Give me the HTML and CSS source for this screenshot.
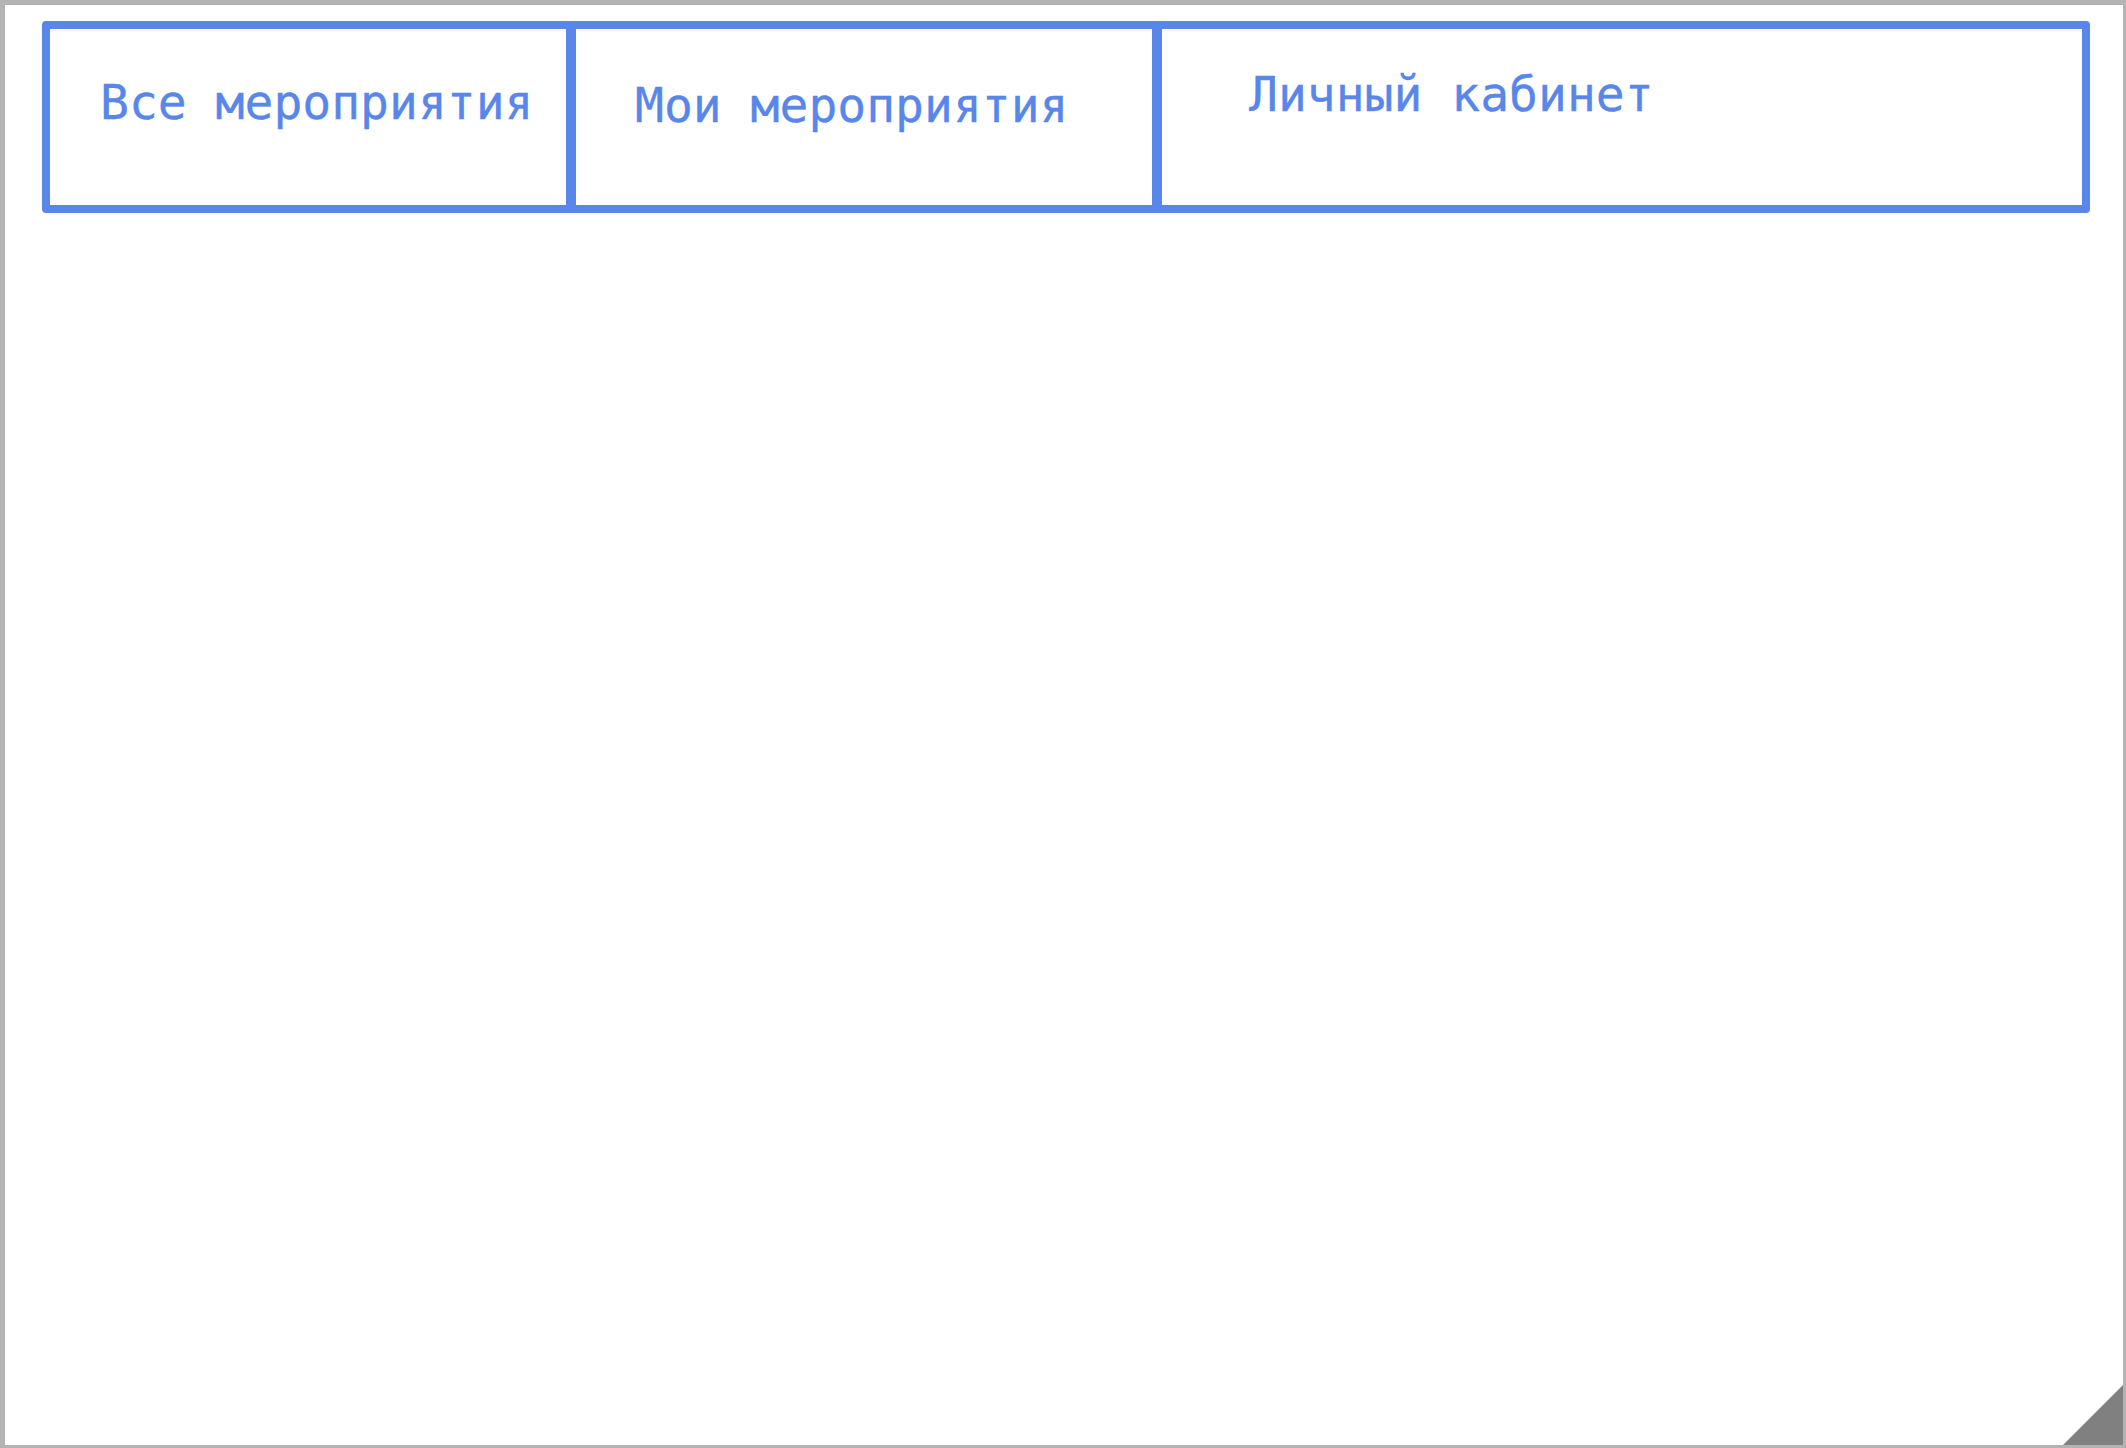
FILE: index.html
```html
<!DOCTYPE html>
<html lang="ru">
<head>
<meta charset="utf-8">
<title>Мероприятия</title>
<link rel="stylesheet" href="styles.css">
</head>
<body>
<div class="frame">
  <nav class="tabs">
    <a class="tab tab-all" href="#">Все мероприятия</a>
    <a class="tab tab-mine" href="#">Мои мероприятия</a>
    <a class="tab tab-account" href="#">Личный кабинет</a>
  </nav>
  <div class="resize-handle"></div>
</div>
</body>
</html>
```

FILE: styles.css
```css
html, body {
  margin: 0;
  padding: 0;
  background: #ffffff;
}

.frame {
  position: relative;
  box-sizing: border-box;
  width: 2126px;
  height: 1448px;
  border-style: solid;
  border-color: #b3b3b3;
  border-width: 5px 3px 3px 5px;
  padding: 16px 0 0 37px;
  background: #ffffff;
}

.tabs {
  display: flex;
  box-sizing: border-box;
  width: 2048px;
  height: 192px;
  border: 8px solid #5886eb;
  border-radius: 4px;
}

.tab {
  display: block;
  box-sizing: border-box;
  height: 100%;
  font-family: "DejaVu Sans Mono", "Liberation Mono", monospace;
  font-size: 48px;
  line-height: 48px;
  color: #5886eb;
  text-decoration: none;
  white-space: nowrap;
  -webkit-text-stroke: 0.3px #5886eb;
}

.tab + .tab {
  border-left: 10px solid #5886eb;
}

.tab-all {
  width: 516px;
  padding: 49px 0 0 50px;
}

.tab-mine {
  width: 586px;
  padding: 52px 0 0 59px;
}

.tab-account {
  flex: 1;
  padding: 41px 0 0 87px;
}

.resize-handle {
  position: absolute;
  right: 0;
  bottom: 0;
  width: 60px;
  height: 60px;
  background: #808080;
  clip-path: polygon(100% 0, 100% 100%, 0 100%);
}
```
